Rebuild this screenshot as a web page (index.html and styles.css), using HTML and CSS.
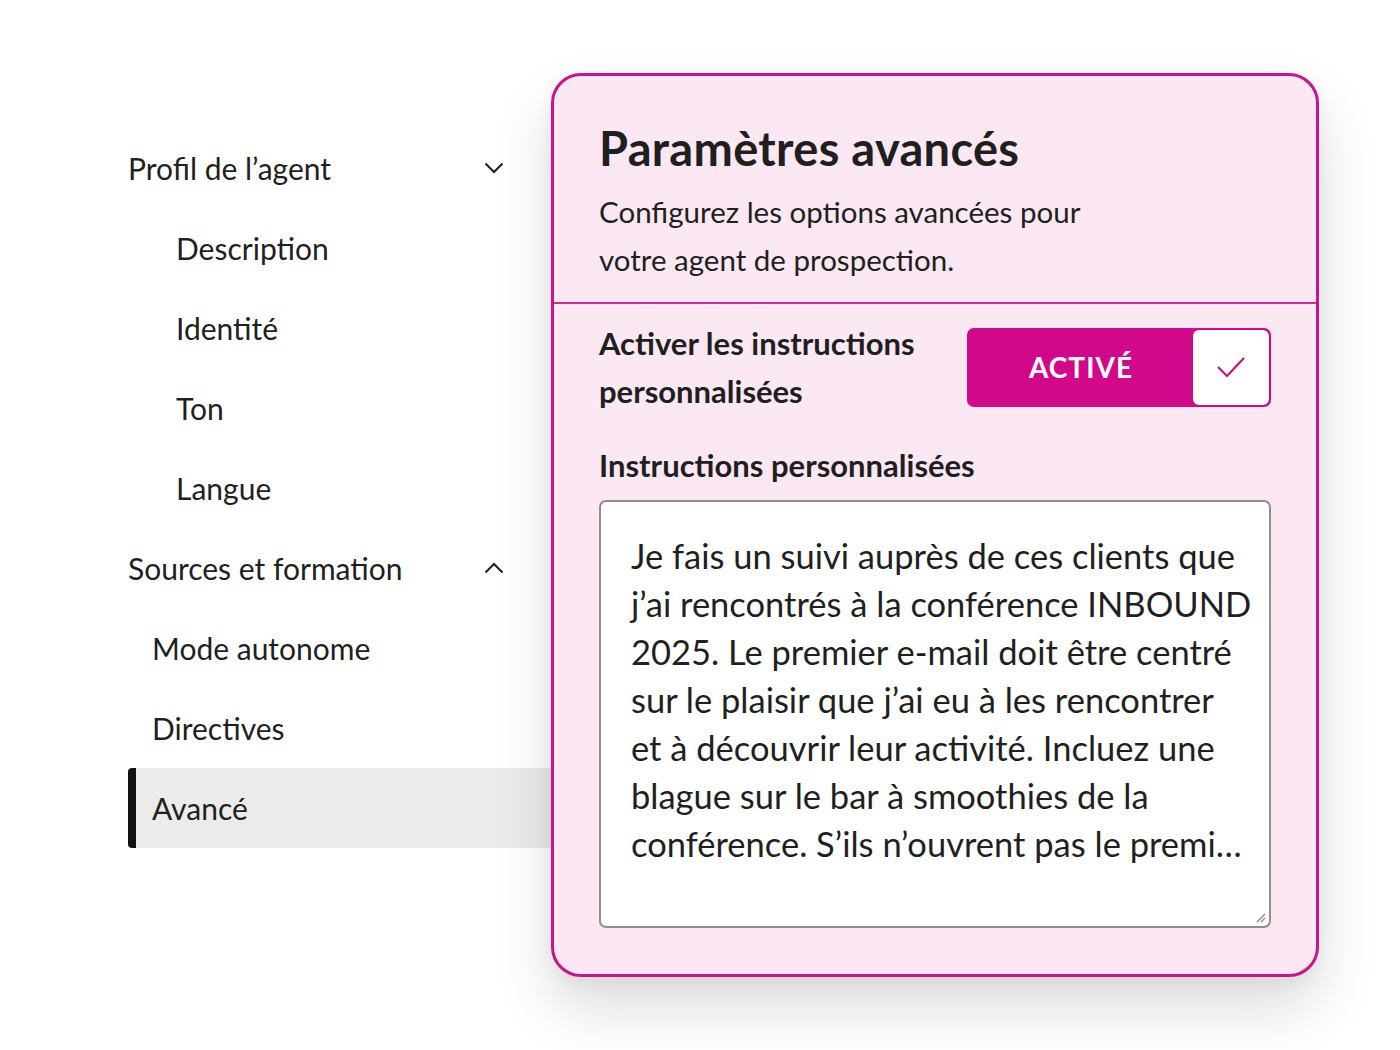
FILE: index.html
```html
<!DOCTYPE html>
<html lang="fr">
<head>
<meta charset="utf-8">
<title>Paramètres avancés</title>
<link rel="stylesheet" href="styles.css">
</head>
<body>
<div class="page">
  <nav class="sidebar">
    <div class="row top">
      <span>Profil de l’agent</span>
      <svg class="chev" width="20" height="12" viewBox="0 0 20 12"><path d="M1.5 1.5 L10 10 L18.5 1.5" fill="none" stroke="#1f1f1f" stroke-width="2"/></svg>
    </div>
    <div class="row sub">Description</div>
    <div class="row sub">Identité</div>
    <div class="row sub">Ton</div>
    <div class="row sub">Langue</div>
    <div class="row top">
      <span>Sources et formation</span>
      <svg class="chev" width="20" height="12" viewBox="0 0 20 12"><path d="M1.5 10.5 L10 2 L18.5 10.5" fill="none" stroke="#1f1f1f" stroke-width="2"/></svg>
    </div>
    <div class="row sub2">Mode autonome</div>
    <div class="row sub2">Directives</div>
    <div class="row sub2 active">Avancé</div>
  </nav>
  <section class="card">
    <header class="card-head">
      <h1>Paramètres avancés</h1>
      <p>Configurez les options avancées pour<br>votre agent de prospection.</p>
    </header>
    <div class="card-body">
      <div class="toggle-row">
        <div class="label">Activer les instructions<br>personnalisées</div>
        <div class="toggle">
          <span class="toggle-text">ACTIVÉ</span>
          <span class="toggle-box">
            <svg width="30" height="24" viewBox="0 0 30 24"><path d="M2 12 L11 21 L28 3" fill="none" stroke="#c0157f" stroke-width="2.2"/></svg>
          </span>
        </div>
      </div>
      <div class="label field-label">Instructions personnalisées</div>
      <div class="textarea">Je fais un suivi auprès de ces clients que<br>j’ai rencontrés à la conférence INBOUND<br>2025. Le premier e-mail doit être centré<br>sur le plaisir que j’ai eu à les rencontrer<br>et à découvrir leur activité. Incluez une<br>blague sur le bar à smoothies de la<br>conférence. S’ils n’ouvrent pas le premi…
        <svg class="grip" width="12" height="12" viewBox="0 0 12 12"><path d="M11 3 L3 11 M11 7 L7 11" stroke="#888" stroke-width="1.3"/></svg>
      </div>
    </div>
  </section>
</div>
</body>
</html>
```
FILE: styles.css
```css
* { box-sizing: border-box; }
html, body { margin: 0; padding: 0; background: #ffffff; }
body {
  font-family: "Lato", "Noto Sans", sans-serif;
  color: #1f1f1f;
  width: 1400px;
  height: 1050px;
  overflow: hidden;
}
.page {
  display: flex;
  align-items: flex-start;
  padding-left: 128px;
  padding-top: 73px;
}
.sidebar {
  width: 423px;
  margin-top: 55px;
  display: flex;
  flex-direction: column;
}
.row {
  height: 80px;
  display: flex;
  align-items: center;
  font-size: 30px;
  white-space: nowrap;
}
.row.top { justify-content: space-between; padding-left: 0; padding-right: 47px; }
.row.sub { padding-left: 48px; }
.row.sub2 { padding-left: 24px; }
.row.active {
  background: #ebebeb;
  border-left: 8px solid #111;
  border-radius: 4px 0 0 4px;
  padding-left: 16px;
}
.card {
  width: 768px;
  height: 904px;
  background: #fce8f3;
  border: 3px solid #c5168c;
  border-radius: 30px;
  box-shadow: 0 30px 60px rgba(0,0,0,0.14), 0 6px 16px rgba(0,0,0,0.05);
  position: relative;
  z-index: 1;
}
.card-head {
  padding: 41px 45px 0 45px;
  height: 228px;
  border-bottom: 2px solid #cc2e93;
}
.card-head h1 {
  margin: 0;
  font-size: 47px;
  font-weight: 700;
  line-height: 62px;
  letter-spacing: 0.3px;
}
.card-head p {
  margin: 9px 0 0 0;
  font-size: 29.5px;
  line-height: 48px;
}
.card-body {
  padding: 15px 45px 0 45px;
}
.toggle-row {
  display: flex;
  justify-content: space-between;
  align-items: center;
}
.label {
  font-size: 31px;
  font-weight: 700;
  line-height: 48px;
}
.toggle {
  width: 304px;
  height: 79px;
  background: #d1088a;
  border: 2px solid #d1088a;
  border-radius: 7px;
  display: flex;
  overflow: hidden;
}
.toggle-text {
  flex: 1;
  display: flex;
  align-items: center;
  justify-content: center;
  color: #fff;
  font-size: 28px;
  font-weight: 700;
  letter-spacing: 1px;
}
.toggle-box {
  width: 76px;
  background: #fff;
  border-radius: 6px;
  display: flex;
  align-items: center;
  justify-content: center;
}
.field-label { margin-top: 26px; }
.textarea {
  margin-top: 11px;
  height: 428px;
  background: #fff;
  border: 2px solid #8e8e8e;
  border-radius: 7px;
  padding: 30px 20px 0 30px;
  font-size: 34.5px;
  line-height: 48px;
  position: relative;
  white-space: nowrap;
}
.grip { position: absolute; right: 3px; bottom: 3px; }
```
